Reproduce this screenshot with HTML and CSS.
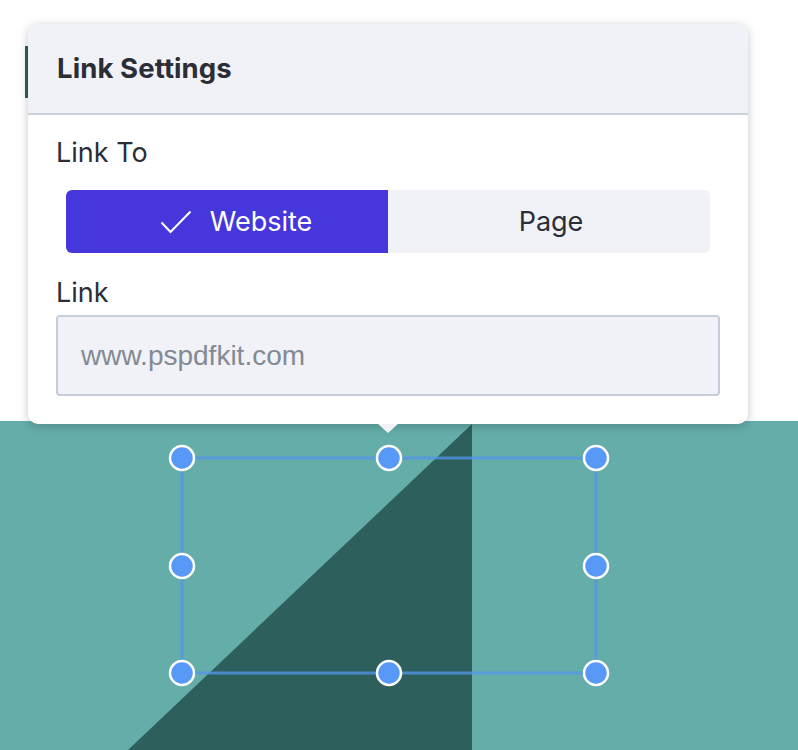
FILE: index.html
```html
<!doctype html>
<html lang="en">
    <head>
        <meta charset="utf-8">
        <title>Link Settings</title>
        <link rel="stylesheet" href="styles.css">
    </head>
    <body>
        <div class="stage">
            <div class="page-edge"></div>
            <div class="page">
                <svg class="artwork" width="798" height="329" viewBox="0 0 798 329">
                    <rect x="0" y="0" width="798" height="329" fill="#65ada8"/>
                    <polygon points="128,329 472,3 472,329" fill="#2d5f5d"/>
                </svg>
            </div>

            <svg class="selection" width="798" height="750" viewBox="0 0 798 750">
                <rect x="182" y="458" width="414" height="215" fill="none" stroke="rgba(84,150,236,0.75)" stroke-width="3"/>
                <g fill="#5898f6" stroke="#fff" stroke-width="2.5">
                    <circle cx="182" cy="458" r="12"/>
                    <circle cx="389" cy="458" r="12"/>
                    <circle cx="596" cy="458" r="12"/>
                    <circle cx="182" cy="566" r="12"/>
                    <circle cx="596" cy="566" r="12"/>
                    <circle cx="182" cy="673" r="12"/>
                    <circle cx="389" cy="673" r="12"/>
                    <circle cx="596" cy="673" r="12"/>
                </g>
            </svg>

            <div class="popover">
                <div class="popover-head">Link Settings</div>
                <div class="popover-body">
                    <div class="field-label">Link To</div>
                    <div class="segmented">
                        <div class="segment active">
                            <svg class="check" width="32" height="24" viewBox="0 0 32 24">
                                <path d="M1.5 12.5 L10.5 22 L30.5 1.5" fill="none" stroke="#fff" stroke-width="2"/>
                            </svg>
                            Website
                        </div>
                        <div class="segment">Page</div>
                    </div>
                    <div class="field-label link-label">Link</div>
                    <div class="text-input">www.pspdfkit.com</div>
                </div>
            </div>
        </div>
    </body>
</html>
```

FILE: styles.css
```css
body{margin:0;background:#fff;font-family:Inter,"Noto Sans",sans-serif;color:#2b2e36;}
.stage{position:relative;width:798px;height:750px;overflow:hidden;}
.page-edge{position:absolute;left:25px;top:46px;width:3px;height:52px;background:#2d5f5d;}
.page{padding-top:421px;}
.artwork{display:block;}
.selection{position:absolute;left:0;top:0;}

.popover{position:absolute;left:28px;top:24px;width:720px;background:#fff;border-radius:10px;box-shadow:0 2px 10px rgba(20,30,40,0.25);}
.popover:after{content:"";position:absolute;left:350px;bottom:-9px;border-left:10px solid transparent;border-right:10px solid transparent;border-top:9px solid #f2f3f6;}
.popover-head{height:89px;line-height:89px;padding-left:29px;background:#f0f2f7;border-bottom:2px solid #c9d1dd;border-radius:10px 10px 0 0;font-size:27.5px;font-weight:700;letter-spacing:0.1px;}
.popover-body{padding:0 28px 28px;}
.field-label{margin-top:20px;line-height:36px;font-size:27px;}
.segmented{display:flex;height:63px;margin:19px 10px 0;border-radius:6px;overflow:hidden;background:#f0f2f7;}
.segment{box-sizing:border-box;width:50%;display:flex;align-items:center;justify-content:center;font-size:27px;padding-left:4px;}
.segment.active{background:#4537dc;color:#fff;padding-left:18px;}
.check{margin-right:18px;}
.link-label{margin-top:22px;}
.text-input{box-sizing:border-box;height:81px;margin-top:4px;padding-left:23px;display:flex;align-items:center;border:2px solid #c6cedb;border-radius:4px;background:#f0f2f7;color:#838a95;font-family:"Liberation Sans",Arial,sans-serif;font-size:28px;}
```
